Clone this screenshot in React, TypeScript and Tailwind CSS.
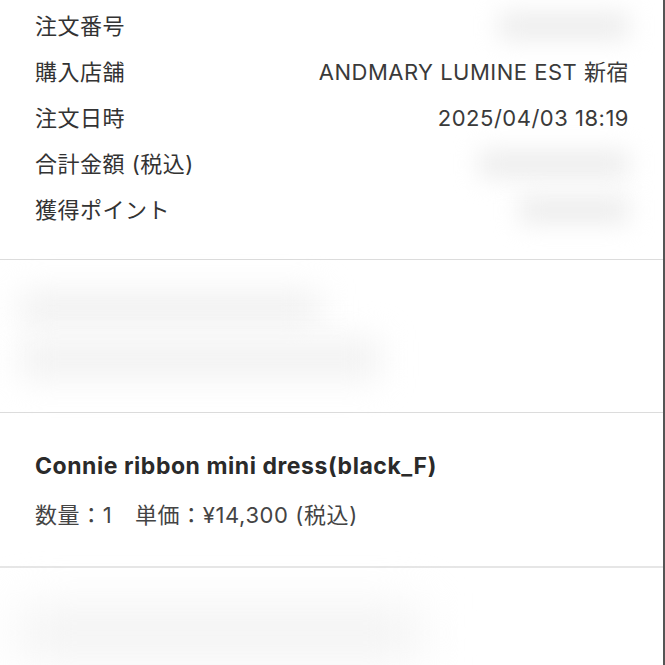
export default function App() {
  const rows = [
    { label: '注文番号', value: null, blur: 'w-[130px]' },
    { label: '購入店舗', value: 'ANDMARY LUMINE EST 新宿', blur: '' },
    { label: '注文日時', value: '2025/04/03 18:19', blur: '' },
    { label: '合計金額 (税込)', value: null, blur: 'w-[150px]' },
    { label: '獲得ポイント', value: null, blur: 'w-[110px]' },
  ];

  return (
    <div
      className="w-[665px] h-[665px] overflow-hidden bg-white text-[#333] border-r-2 border-[#555]"
      style={{ fontFamily: 'Inter, "Noto Sans CJK JP", sans-serif' }}
    >
      {/* order summary */}
      <div className="pl-[35px] pr-[34px] pt-[3px] pb-[26px]">
        {rows.map((row) => (
          <div key={row.label} className="flex items-center justify-between h-[46px] text-[22px] tracking-[0.5px]">
            <span>{row.label}</span>
            {row.value ? (
              <span className="text-[#3a3a3a]">{row.value}</span>
            ) : (
              <span className={`${row.blur} h-[26px] bg-[#ececec] blur-md rounded`} />
            )}
          </div>
        ))}
      </div>

      <div className="h-px bg-[#dcdcdc]" />

      {/* redacted block */}
      <div className="h-[152px] flex items-center pl-[20px]">
        <div className="flex flex-col gap-4">
          <div className="w-[300px] h-[30px] bg-[#efefef] blur-lg rounded" />
          <div className="w-[360px] h-[40px] bg-[#f2f2f2] blur-lg rounded" />
        </div>
      </div>

      <div className="h-px bg-[#dcdcdc]" />

      {/* product */}
      <div className="pl-[35px] pt-[38px] pb-[36px]">
        <div className="text-[23px] leading-[30px] font-bold tracking-[0.55px] text-[#2a2a2a]">
          Connie ribbon mini dress(black_F)
        </div>
        <div className="mt-[19px] text-[22px] leading-[30px] tracking-[0.6px] text-[#444] whitespace-pre">
          数量：1　単価：¥14,300 (税込)
        </div>
      </div>

      <div className="h-[2px] bg-[#e6e6e6]" />

      {/* redacted block */}
      <div className="pl-[20px] pt-[40px]">
        <div className="w-[400px] h-[50px] bg-[#f2f2f2] blur-xl rounded" />
      </div>
    </div>
  );
}
